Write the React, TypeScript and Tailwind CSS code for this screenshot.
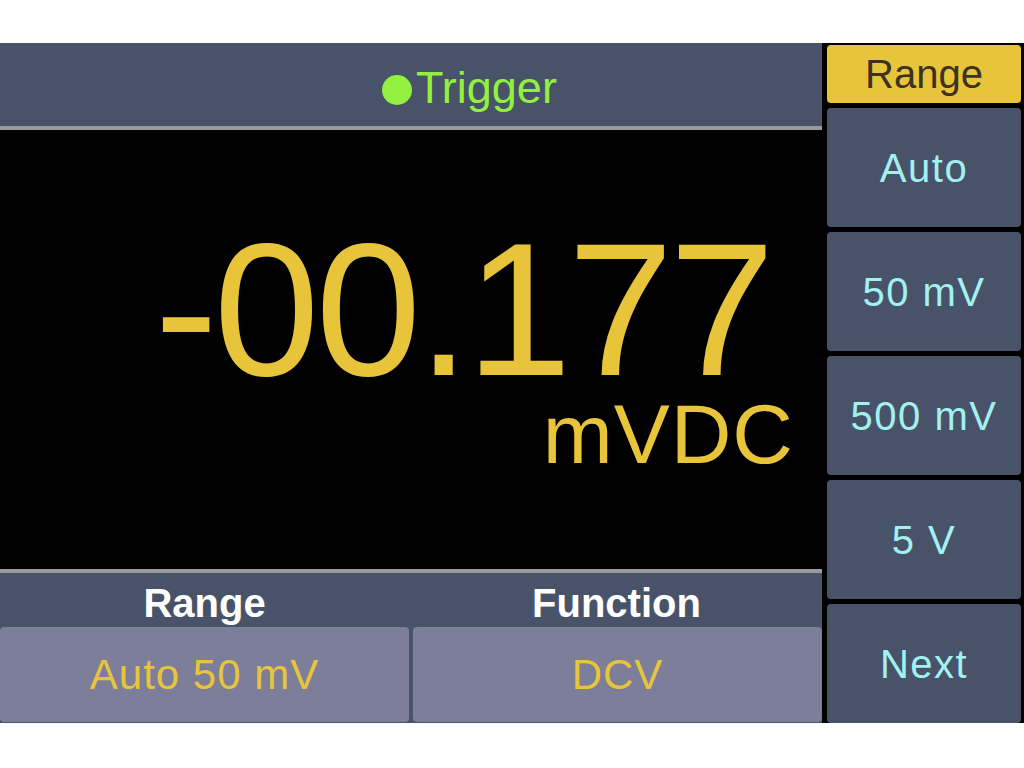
import React from "react";

const sideButtons = ["Auto", "50 mV", "500 mV", "5 V", "Next"];

export default function App() {
  return (
    <div className="w-[1024px] h-[768px] bg-white flex flex-col font-['Liberation_Sans',Arial,sans-serif]">
      <div className="h-[43px]" />

      <div className="h-[680px] bg-black flex">
        {/* main display */}
        <div className="w-[822px] flex flex-col">
          <div className="h-[83px] bg-[#485369] flex items-center pl-[382px] pt-[6px]">
            <span className="w-[30px] h-[30px] mt-[4px] rounded-full bg-[#92f03e]" />
            <span className="ml-[4px] text-[45px] leading-none text-[#92f03e]">Trigger</span>
          </div>
          <div className="h-[4px] bg-[#9a9a9a]" />

          <div className="flex-1 flex flex-col items-end pt-[104px]">
            <div className="mr-[51px] text-[190px] leading-[150px] tracking-[-4px] text-[#e8c43a]">
              -00.177
            </div>
            <div className="mr-[28px] mt-[15px] text-[84px] leading-[70px] tracking-[1px] text-[#e8c43a]">
              mVDC
            </div>
          </div>

          <div className="h-[4px] bg-[#9a9a9a]" />
          <div className="h-[54px] bg-[#485369] grid grid-cols-2 text-white font-bold text-[40px]">
            <div className="flex items-center justify-center pr-[2px]">Range</div>
            <div className="flex items-center justify-center">Function</div>
          </div>
          <div className="h-[96px] bg-[#485369] flex gap-[4px] pb-[1px]">
            <div className="w-[409px] rounded-[4px] bg-[#7c7e9a] flex items-center justify-center text-[42px] tracking-[1px] text-[#e8c43a]">
              Auto 50 mV
            </div>
            <div className="flex-1 rounded-[4px] bg-[#7c7e9a] flex items-center justify-center text-[42px] tracking-[1px] text-[#e8c43a]">
              DCV
            </div>
          </div>
        </div>

        {/* soft keys */}
        <div className="flex-1 flex flex-col pl-[5px] pr-[3px] pt-[2px]">
          <div className="h-[58px] rounded-[4px] bg-[#e8c43a] flex items-center justify-center text-[40px] text-[#3b3220]">
            Range
          </div>
          {sideButtons.map((label) => (
            <div
              key={label}
              className="mt-[5px] h-[119px] rounded-[4px] bg-[#485369] flex items-center justify-center text-[40px] tracking-[1.5px] text-[#a2f1f0]"
            >
              {label}
            </div>
          ))}
        </div>
      </div>

      <div className="flex-1" />
    </div>
  );
}
